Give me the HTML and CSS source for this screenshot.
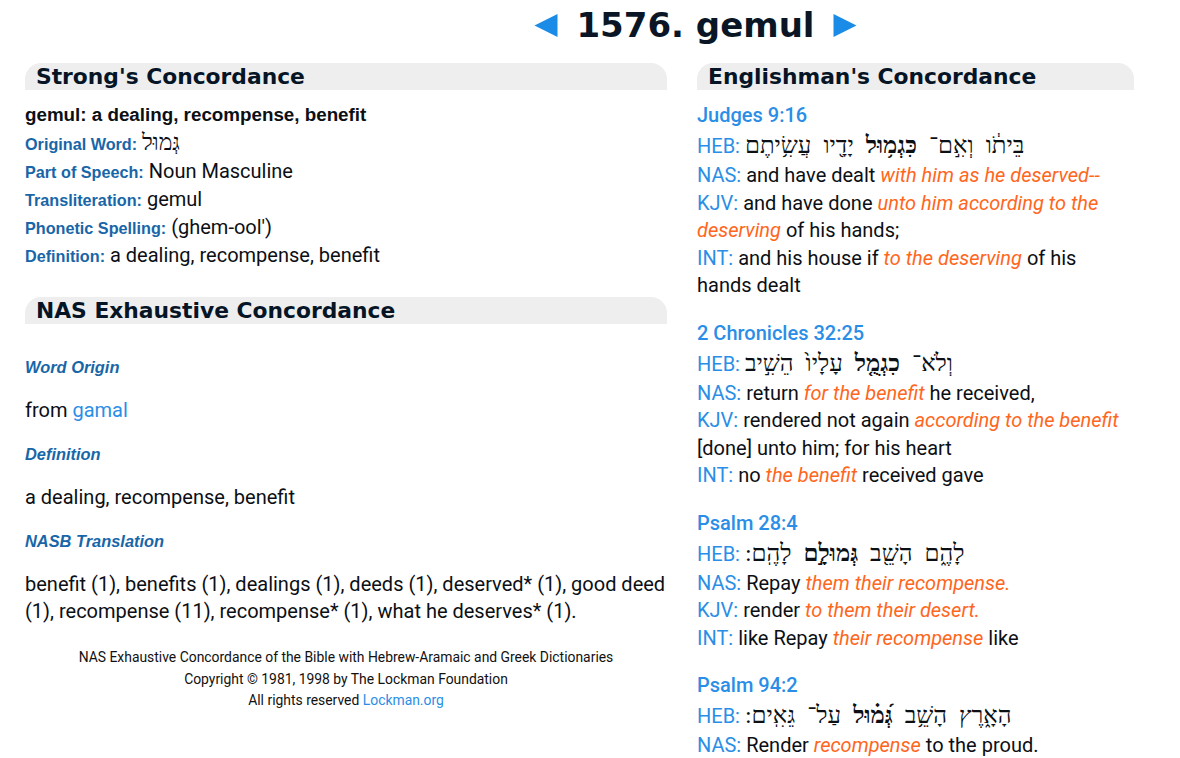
FILE: index.html
```html
<!DOCTYPE html>
<html lang="en">
<head>
<meta charset="utf-8">
<title>1576. gemul</title>
<link rel="stylesheet" href="styles.css">
</head>
<body>
<header class="title">
  <a class="nav" href="#"><svg class="arrow" viewBox="0 0 24 24" width="24" height="24"><polygon points="24,0 24,24 0,12" fill="#1a8be6"/></svg></a>
  <span class="title-text">1576. gemul</span>
  <a class="nav" href="#"><svg class="arrow" viewBox="0 0 24 24" width="24" height="24"><polygon points="0,0 0,24 24,12" fill="#1a8be6"/></svg></a>
</header>
<main class="cols">
  <section class="left">
    <h2 class="bar">Strong's Concordance</h2>
    <div class="strongs">
      <div class="line lead">gemul: a dealing, recompense, benefit</div>
      <div class="line"><span class="lbl">Original Word:</span> <span class="heb-small" lang="he">גְּמוּל</span></div>
      <div class="line"><span class="lbl">Part of Speech:</span> Noun Masculine</div>
      <div class="line"><span class="lbl">Transliteration:</span> gemul</div>
      <div class="line"><span class="lbl">Phonetic Spelling:</span> (ghem-ool')</div>
      <div class="line"><span class="lbl">Definition:</span> a dealing, recompense, benefit</div>
    </div>
    <h2 class="bar bar2">NAS Exhaustive Concordance</h2>
    <div class="nas">
      <div class="sub">Word Origin</div>
      <p class="para">from <a class="link" href="#">gamal</a></p>
      <div class="sub">Definition</div>
      <p class="para">a dealing, recompense, benefit</p>
      <div class="sub">NASB Translation</div>
      <p class="para">benefit (1), benefits (1), dealings (1), deeds (1), deserved* (1), good deed (1), recompense (11), recompense* (1), what he deserves* (1).</p>
      <div class="footer">
        NAS Exhaustive Concordance of the Bible with Hebrew-Aramaic and Greek Dictionaries<br>
        Copyright © 1981, 1998 by The Lockman Foundation<br>
        All rights reserved <a class="link" href="#">Lockman.org</a>
      </div>
    </div>
  </section>
  <section class="right">
    <h2 class="bar">Englishman's Concordance</h2>
    <div class="entries">
      <div class="entry">
        <div class="ref">Judges 9:16</div>
        <div class="heb"><span class="tag">HEB:</span> <span class="hw" lang="he" dir="rtl">בֵּיתֹ֔ו וְאִ֣ם־ <b>כִּגְמ֥וּל</b> יָדָ֖יו עֲשִׂ֥יתֶם</span></div>
        <div class="txt"><span class="tag">NAS:</span> and have dealt <i class="hl">with him as he deserved--</i></div>
        <div class="txt"><span class="tag">KJV:</span> and have done <i class="hl">unto him according to the deserving</i> of his hands;</div>
        <div class="txt"><span class="tag">INT:</span> and his house if <i class="hl">to the deserving</i> of his hands dealt</div>
      </div>
      <div class="entry">
        <div class="ref">2 Chronicles 32:25</div>
        <div class="heb"><span class="tag">HEB:</span> <span class="hw" lang="he" dir="rtl">וְלֹא־ <b>כִגְמֻ֤ל</b> עָלָיו֙ הֵשִׁ֣יב</span></div>
        <div class="txt"><span class="tag">NAS:</span> return <i class="hl">for the benefit</i> he received,</div>
        <div class="txt"><span class="tag">KJV:</span> rendered not again <i class="hl">according to the benefit</i> [done] unto him; for his heart</div>
        <div class="txt"><span class="tag">INT:</span> no <i class="hl">the benefit</i> received gave</div>
      </div>
      <div class="entry">
        <div class="ref">Psalm 28:4</div>
        <div class="heb"><span class="tag">HEB:</span> <span class="hw" lang="he" dir="rtl">לָהֶ֑ם הָשֵׁ֖ב <b>גְּמוּלָ֣ם</b> לָהֶֽם:</span></div>
        <div class="txt"><span class="tag">NAS:</span> Repay <i class="hl">them their recompense.</i></div>
        <div class="txt"><span class="tag">KJV:</span> render <i class="hl">to them their desert.</i></div>
        <div class="txt"><span class="tag">INT:</span> like Repay <i class="hl">their recompense</i> like</div>
      </div>
      <div class="entry">
        <div class="ref">Psalm 94:2</div>
        <div class="heb"><span class="tag">HEB:</span> <span class="hw" lang="he" dir="rtl">הָאָ֑רֶץ הָשֵׁ֥ב <b>גְּ֝מ֗וּל</b> עַל־ גֵּאִֽים:</span></div>
        <div class="txt"><span class="tag">NAS:</span> Render <i class="hl">recompense</i> to the proud.</div>
      </div>
    </div>
  </section>
</main>
</body>
</html>
```
FILE: styles.css
```css
* { box-sizing: border-box; }
html, body { margin: 0; padding: 0; background: #fff; }
body {
  font-family: Roboto, "Liberation Sans", sans-serif;
  color: #0c0f14;
  overflow: hidden;
  height: 758px;
}
a { text-decoration: none; }

.title {
  height: 63px;
  display: flex;
  justify-content: center;
  align-items: flex-start;
  gap: 18px;
  padding-left: 211px;
}
.title-text {
  font-family: "DejaVu Sans", Verdana, sans-serif;
  font-weight: bold;
  font-size: 34px;
  line-height: 50px;
  color: #0a1626;
}
.nav { display: flex; align-items: center; height: 50px; }
.arrow { display: block; width: 24px; height: 23px; }

.cols {
  display: flex;
  gap: 30px;
  padding-left: 25px;
}
.left { width: 642px; }
.right { width: 437px; }

.bar {
  margin: 0;
  height: 27px;
  background: #eeeeee;
  border-radius: 16px 16px 0 0;
  padding-left: 11px;
  font-family: "DejaVu Sans", Verdana, sans-serif;
  font-weight: bold;
  font-size: 21.8px;
  line-height: 28px;
  color: #061526;
  white-space: nowrap;
  overflow: hidden;
}

.strongs { padding-top: 11px; }
.line {
  height: 28px;
  line-height: 28px;
  font-size: 20px;
  white-space: nowrap;
}
.lead {
  font-family: "Liberation Sans", Arial, sans-serif;
  font-weight: bold;
  font-size: 18.8px;
}
.lbl {
  font-family: "Liberation Sans", Arial, sans-serif;
  font-weight: bold;
  font-size: 16.2px;
  color: #1866a8;
}
.heb-small {
  font-family: "Liberation Serif", "DejaVu Sans", serif;
  font-size: 23px;
}

.bar2 { margin-top: 28px; }

.nas { padding-top: 30px; }
.sub {
  font-family: "Liberation Sans", Arial, sans-serif;
  font-style: italic;
  font-weight: bold;
  font-size: 16.4px;
  line-height: 27px;
  color: #1866a8;
}
.para {
  margin: 16px 0 17px;
  font-size: 20px;
  line-height: 27px;
}
.link { color: #2b8ee6; }
.footer {
  margin-top: 22px;
  text-align: center;
  font-size: 13.9px;
  line-height: 21.5px;
  color: #111;
}

.entries { padding-top: 11px; }
.entry { margin-bottom: 20px; }
.ref {
  font-size: 20px;
  font-weight: 500;
  line-height: 28px;
  color: #2b8ee6;
}
.tag { color: #2b8ee6; }
.heb {
  font-size: 20px;
  line-height: 32px;
  height: 32px;
  white-space: nowrap;
}
.hw {
  font-family: "Liberation Serif", "DejaVu Sans", serif;
  font-size: 24px;
  word-spacing: 6px;
}
.hw b { font-weight: bold; }
.txt {
  font-size: 20px;
  line-height: 27.5px;
  padding-top: 1px;
  margin-bottom: -1px;
}
.hl {
  color: #ff6620;
}
```
